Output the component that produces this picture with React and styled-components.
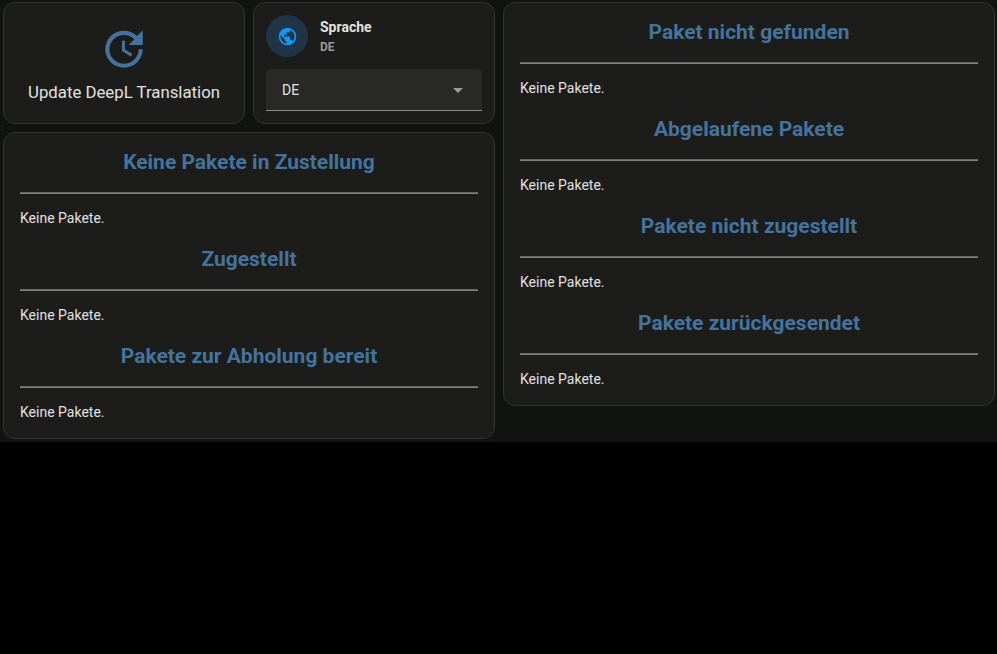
import React from 'react';
import styled, { createGlobalStyle } from 'styled-components';

const GlobalStyle = createGlobalStyle`
  * { box-sizing: border-box; }
  body {
    margin: 0;
    background: #000;
    color: #e1e1e1;
    font-family: Roboto, "Noto Sans", sans-serif;
    font-size: 14px;
    line-height: 20px;
  }
`;

const Dashboard = styled.main`
  display: grid;
  grid-template-columns: 492px 492px;
  gap: 8px;
  align-items: start;
  height: 442px;
  padding: 2px 2px 0 3px;
  background: #111310;
`;

const Column = styled.div`
  display: flex;
  flex-direction: column;
  gap: 8px;
`;

const TopRow = styled.div`
  display: grid;
  grid-template-columns: 1fr 1fr;
  gap: 8px;
  height: 122px;
`;

const Card = styled.section`
  background: #1c1c1a;
  border: 1px solid #333331;
  border-radius: 12px;
`;

const ButtonCard = styled(Card).attrs({ as: 'button', type: 'button' })`
  display: flex;
  flex-direction: column;
  align-items: center;
  padding: 21px 0 0;
  color: #e1e1e1;
  font: 400 16.8px/20px Roboto, sans-serif;
  white-space: nowrap;

  svg {
    width: 50px;
    height: 50px;
    margin-bottom: 8px;
    fill: #44739e;
  }
`;

const LanguageCard = styled(Card)`
  padding: 12px;
`;

const Entity = styled.div`
  display: flex;
  align-items: center;
  gap: 12px;
  height: 42px;
  margin-bottom: 12px;
`;

const IconDisc = styled.div`
  display: grid;
  place-items: center;
  width: 42px;
  height: 42px;
  border-radius: 50%;
  background: #1f3447;

  svg {
    width: 21px;
    height: 21px;
    fill: #1397f5;
  }
`;

const EntityName = styled.div`
  font-weight: 700;
  line-height: 20px;
`;

const EntityState = styled.div`
  color: #9b9b9b;
  font-size: 12px;
  font-weight: 700;
  line-height: 20px;
  margin-bottom: -2px;
`;

const Select = styled.div`
  display: flex;
  align-items: center;
  justify-content: space-between;
  height: 42px;
  padding: 0 12px 0 16px;
  border-bottom: 1px solid #8b8b8a;
  border-radius: 4px 4px 0 0;
  background: #282826;

  svg {
    width: 24px;
    height: 24px;
    fill: #9b9b9b;
  }
`;

const PackageCard = styled(Card)`
  padding: 15px 16px 16px;
`;

const Group = styled.div`
  height: 97px;

  &:last-child { height: 80px; }
`;

const Heading = styled.h2`
  margin: 0;
  color: #44739e;
  font-size: 21px;
  font-weight: 700;
  line-height: 28px;
  text-align: center;
`;

const Rule = styled.hr`
  height: 2px;
  margin: 16px 0 14px;
  border: 0;
  border-top: 1px solid #656565;
  border-bottom: 1px solid #828282;
`;

const Empty = styled.p`
  margin: 0;
`;

const UpdateIcon = () => (
  <svg viewBox="0 0 24 24">
    <path d="M21,10.12H14.22L16.96,7.3C14.23,4.6 9.81,4.5 7.08,7.2C4.35,9.91 4.35,14.28 7.08,17C9.81,19.7 14.23,19.7 16.96,17C18.32,15.65 19,14.08 19,12.1H21C21,14.08 20.12,16.65 18.36,18.39C14.85,21.87 9.15,21.87 5.64,18.39C2.14,14.92 2.11,9.28 5.62,5.81C9.13,2.34 14.76,2.34 18.27,5.81L21,3V10.12M12.5,8V12.25L16,14.33L15.28,15.54L11,13V8H12.5Z" />
  </svg>
);

const EarthIcon = () => (
  <svg viewBox="0 0 24 24">
    <path d="M17.9,17.39C17.64,16.59 16.89,16 16,16H15V13A1,1 0 0,0 14,12H8V10H10A1,1 0 0,0 11,9V7H13A2,2 0 0,0 15,5V4.59C17.93,5.77 20,8.64 20,12C20,14.08 19.2,15.97 17.9,17.39M11,19.93C7.05,19.44 4,16.08 4,12C4,11.38 4.08,10.78 4.21,10.21L9,15V16A2,2 0 0,0 11,18M12,2A10,10 0 0,0 2,12A10,10 0 0,0 12,22A10,10 0 0,0 22,12A10,10 0 0,0 12,2Z" />
  </svg>
);

const PackageGroups = ({ titles }) => (
  <PackageCard>
    {titles.map((title) => (
      <Group key={title}>
        <Heading>{title}</Heading>
        <Rule />
        <Empty>Keine Pakete.</Empty>
      </Group>
    ))}
  </PackageCard>
);

export default function App() {
  return (
    <>
      <GlobalStyle />
      <Dashboard>
        <Column>
          <TopRow>
            <ButtonCard>
              <UpdateIcon />
              Update DeepL Translation
            </ButtonCard>
            <LanguageCard>
              <Entity>
                <IconDisc><EarthIcon /></IconDisc>
                <div>
                  <EntityName>Sprache</EntityName>
                  <EntityState>DE</EntityState>
                </div>
              </Entity>
              <Select>
                DE
                <svg viewBox="0 0 24 24"><path d="M7 10l5 5 5-5z" /></svg>
              </Select>
            </LanguageCard>
          </TopRow>
          <PackageGroups titles={['Keine Pakete in Zustellung', 'Zugestellt', 'Pakete zur Abholung bereit']} />
        </Column>
        <Column>
          <PackageGroups titles={['Paket nicht gefunden', 'Abgelaufene Pakete', 'Pakete nicht zugestellt', 'Pakete zurückgesendet']} />
        </Column>
      </Dashboard>
    </>
  );
}
